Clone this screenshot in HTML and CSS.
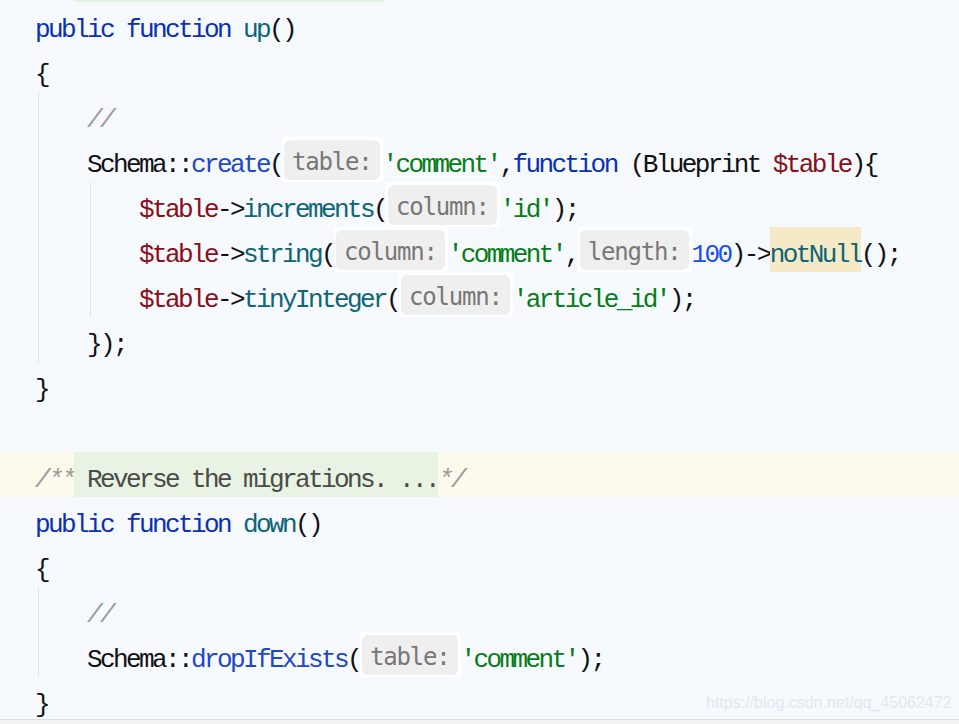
FILE: index.html
```html
<!DOCTYPE html>
<html>
<head>
<meta charset="utf-8">
<link rel="stylesheet" href="styles.css">
</head>
<body>
<div class="editor">
  <div class="topbar"></div>
  <div class="row"><span class="kw">public function </span><span class="fn">up</span><span class="pl">()</span></div>
  <div class="row"><span class="pl">{</span></div>
  <div class="g1">
    <div class="row"><span class="cm">//</span></div>
    <div class="row"><span class="pl">Schema::</span><span class="sm">create</span><span class="pl">(</span><span class="hint"><span class="hin">table:</span></span><span class="str">'comment'</span><span class="pl">,</span><span class="kw">function </span><span class="pl">(Blueprint </span><span class="var">$table</span><span class="pl">){</span></div>
    <div class="g2">
      <div class="row"><span class="var">$table</span><span class="pl">-&gt;</span><span class="fn">increments</span><span class="pl">(</span><span class="hint"><span class="hin">column:</span></span><span class="str">'id'</span><span class="pl">);</span></div>
      <div class="row"><span class="var">$table</span><span class="pl">-&gt;</span><span class="fn">string</span><span class="pl">(</span><span class="hint"><span class="hin">column:</span></span><span class="str">'comment'</span><span class="pl">,</span><span class="hint"><span class="hin">length:</span></span><span class="num">100</span><span class="pl">)-&gt;</span><span class="fn hl">notNull</span><span class="pl">();</span></div>
      <div class="row"><span class="var">$table</span><span class="pl">-&gt;</span><span class="fn">tinyInteger</span><span class="pl">(</span><span class="hint"><span class="hin">column:</span></span><span class="str">'article_id'</span><span class="pl">);</span></div>
    </div>
    <div class="row"><span class="pl">});</span></div>
  </div>
  <div class="row"><span class="pl">}</span></div>
  <div class="row"><span class="pl"> </span></div>
  <div class="row fold"><span class="cm">/**</span><span class="foldtext"> Reverse the migrations. ...</span><span class="cm">*/</span></div>
  <div class="row"><span class="kw">public function </span><span class="fn">down</span><span class="pl">()</span></div>
  <div class="row"><span class="pl">{</span></div>
  <div class="g1">
    <div class="row"><span class="cm">//</span></div>
    <div class="row"><span class="pl">Schema::</span><span class="sm">dropIfExists</span><span class="pl">(</span><span class="hint"><span class="hin">table:</span></span><span class="str">'comment'</span><span class="pl">);</span></div>
  </div>
  <div class="row"><span class="pl">}</span></div>
</div>
<div class="footer"></div>
<div class="watermark">https://blog.csdn.net/qq_45062472</div>
</body>
</html>
```
FILE: styles.css
```css
html, body {
  margin: 0;
  padding: 0;
  background: #f2f2f2;
}
body {
  width: 959px;
  height: 724px;
  overflow: hidden;
  position: relative;
}
.editor {
  height: 719px;
  overflow: hidden;
  background: #f6f9fe;
  border-bottom: 1px solid #dedede;
  font-family: "Liberation Mono", monospace;
  font-size: 26px;
  letter-spacing: -2.6px;
  color: #080808;
}
.topbar {
  height: 2px;
  width: 311px;
  margin-left: 74px;
  background: #e5f3e2;
}
.row {
  height: 45px;
  box-sizing: border-box;
  display: flex;
  align-items: flex-end;
  padding-bottom: 2px;
  padding-left: 35px;
  white-space: pre;
  line-height: normal;
}
.g1 {
  margin-left: 38px;
  border-left: 1px solid #e1e3e6;
}
.g1 > .row {
  padding-left: 48px;
}
.g2 {
  margin-left: 51px;
  border-left: 1px solid #e1e3e6;
}
.g2 > .row {
  padding-left: 48px;
}
.kw { color: #0a30b5; }
.fn { color: #0e6577; }
.pl { color: #111111; }
.sm { color: #1d49c6; }
.var { color: #8a0f18; }
.str { color: #067d17; }
.num { color: #1750eb; }
.cm { color: #9a9a9a; font-style: italic; }
.hint {
  align-self: stretch;
  margin-bottom: -2px;
  padding: 3px 3px 2px 2px;
  background: #ffffff;
  display: flex;
}
.hin {
  display: flex;
  align-items: flex-end;
  padding: 0 8px 4px 8px;
  background: #efefef;
  border-radius: 6px;
  font-family: "DejaVu Sans Mono", monospace;
  font-size: 24px;
  letter-spacing: -1.2px;
  color: #777777;
}
.hl {
  align-self: stretch;
  margin-bottom: -2px;
  padding-bottom: 2px;
  display: flex;
  align-items: flex-end;
  background: #f5eac5;
}
.fold {
  background: #fbfaec;
}
.foldtext {
  align-self: stretch;
  margin-bottom: -2px;
  padding-bottom: 2px;
  display: flex;
  align-items: flex-end;
  background: #e8f3e3;
  color: #4a4a4a;
}
.footer {
  height: 4px;
  background: #f2f2f2;
}
.watermark {
  position: absolute;
  left: 706px;
  top: 694px;
  font-family: "Liberation Sans", Arial, sans-serif;
  font-size: 16px;
  color: #e3e7ed;
}
```
